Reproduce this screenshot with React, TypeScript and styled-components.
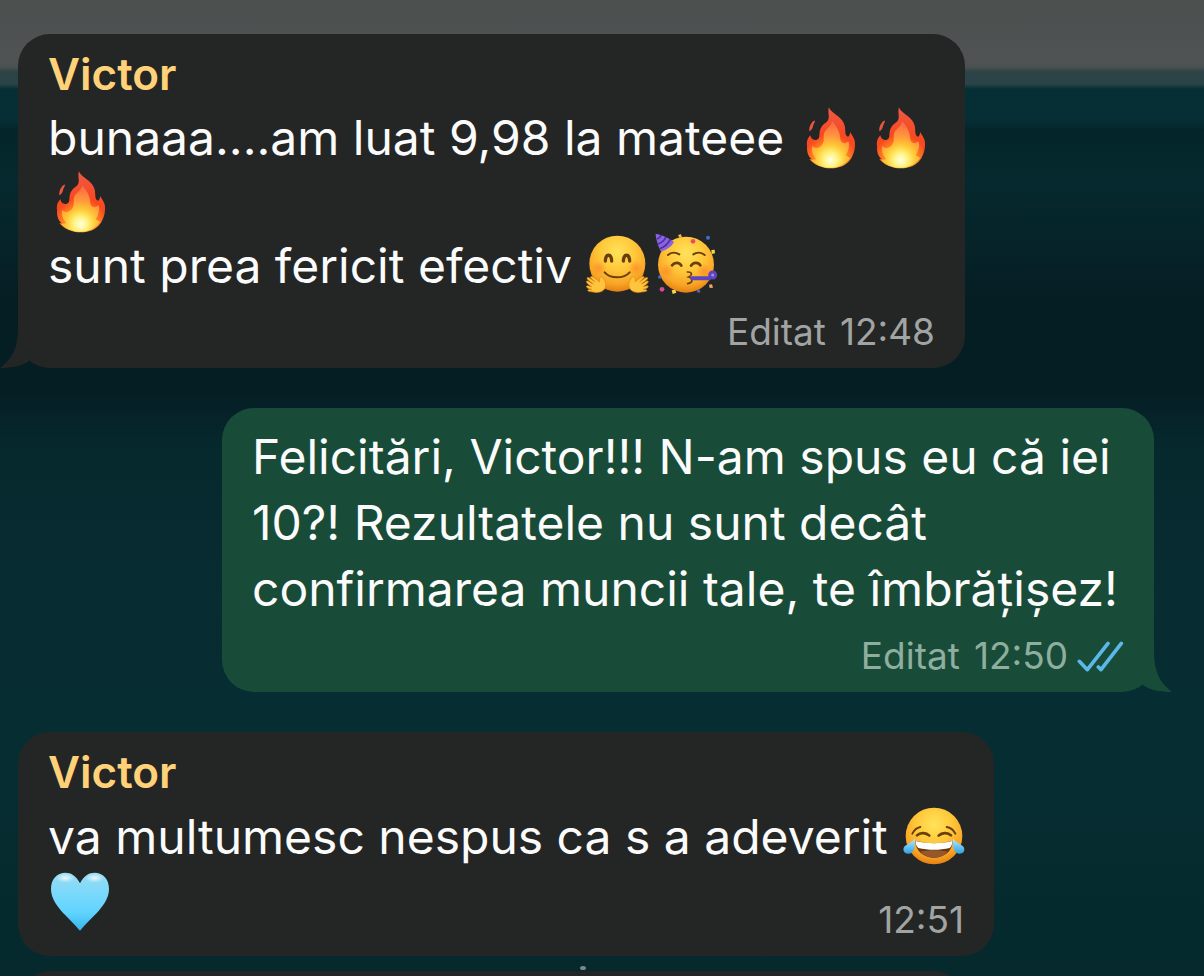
import React from "react";
import styled, { createGlobalStyle } from "styled-components";

const GlobalStyle = createGlobalStyle`
  *, *::before, *::after { box-sizing: border-box; }
  body {
    margin: 0;
    background: #052a2f;
    font-family: Inter, "Liberation Sans", sans-serif;
    color: #fbfbfb;
  }
`;

const incoming = "#242625";
const outgoing = "#184c38";

const Wallpaper = styled.main`
  position: relative;
  height: 100vh;
  overflow: hidden;
  padding: 34px 50px 0 18px;
  background: linear-gradient(
    to bottom,
    #4b504f 0,
    #4f5353 62px,
    #4a5050 67px,
    #2b4345 72px,
    #2a4448 84px,
    #052f35 89px,
    #052f34 120px,
    #04262b 130px,
    #05292e 180px,
    #05242a 240px,
    #051e23 300px,
    #051e24 390px,
    #06292e 450px,
    #072c31 600px,
    #062e32 740px,
    #05292d 980px
  );
`;

const Speck = styled.span`
  position: absolute;
  left: 48%;
  top: 966px;
  width: 6px;
  height: 4px;
  margin-left: 2px;
  border-radius: 50%;
  background: #77898a;
`;

const Thread = styled.ol`
  display: flex;
  flex-direction: column;
  gap: 40px;
  margin: 0;
  padding: 0;
  list-style: none;
`;

const Bubble = styled.li<{ $mine?: boolean; $width: number }>`
  position: relative;
  align-self: ${(p) => (p.$mine ? "flex-end" : "flex-start")};
  width: 100%;
  max-width: ${(p) => p.$width}px;
  padding: ${(p) => (p.$mine ? 16 : 12)}px 30px 14px;
  border-radius: 32px;
  background: ${(p) => (p.$mine ? outgoing : incoming)};
`;

const NextBubble = styled(Bubble)`
  margin-top: -25px;
  min-height: 80px;
`;

const Sender = styled.h2`
  margin: 0 0 4px;
  font-size: 44px;
  line-height: 56px;
  font-weight: 600;
  color: #ffd279;
`;

const Text = styled.p<{ $compact?: boolean }>`
  margin: 0;
  font-size: 48px;
  line-height: ${(p) => (p.$compact ? 64 : 66)}px;
  white-space: nowrap;
`;

const Meta = styled.footer<{ $mine?: boolean; $inline?: boolean }>`
  display: flex;
  justify-content: flex-end;
  align-items: center;
  gap: 14px;
  margin-top: ${(p) => (p.$inline ? -38 : 12)}px;
  font-size: 37px;
  line-height: 44px;
  color: ${(p) => (p.$mine ? "#8fae9f" : "#a2a4a3")};
`;

const Stamp = styled.span`
  display: flex;
  align-items: center;
  gap: 8px;
`;

const TailShape = styled.svg<{ $mine?: boolean }>`
  position: absolute;
  bottom: 0;
  ${(p) => (p.$mine ? "right: -18px;" : "left: -18px; transform: scaleX(-1);")}
  width: 40px;
  height: 40px;
  fill: ${(p) => (p.$mine ? outgoing : incoming)};
`;

const Emoji = styled.svg`
  width: 64px;
  height: 64px;
  margin-right: 6px;
  vertical-align: top;
`;

const Tail = ({ mine }: { mine?: boolean }) => (
  <TailShape $mine={mine} viewBox="0 0 40 40" aria-hidden="true">
    <path d="M22 0C22 20 28 31 40 40C28 40 18 38 11 33L4 20L10 0Z" />
  </TailShape>
);

const Ticks = () => (
  <svg width="48" height="31" viewBox="714 62 144 93" role="img" aria-label="Citit">
    <g fill="none" stroke="#5bb8e8" strokeWidth="11" strokeLinecap="round" strokeLinejoin="round">
      <path d="M724 123L748 148L810 69" />
      <path d="M781 140L789 148L850 69" />
    </g>
  </svg>
);

const Fire = () => (
  <Emoji viewBox="33 48 192 192" role="img" aria-label="foc">
    <path
      fill="url(#flame)"
      d="M126 52C130 66 152 74 165 91C181 112 170 130 180 139C186 143 188 134 190 126C196 140 206 146 204 168C203 184 199 194 192 206L189 210C177 226 157 235 132 235C104 235 80 224 67 207L74 208C63 198 59 186 60 168C59 154 61 146 70 136C72 147 80 152 90 149C103 143 92 126 104 110C113 98 119 99 123 91C129 80 121 66 126 52Z"
    />
    <path
      fill="url(#flameInner)"
      d="M135 94C150 108 160 130 160 148C162 160 172 164 184 154C190 166 184 184 176 196L190 204C174 224 154 233 130 233C106 233 86 225 72 210L88 208C76 194 72 180 76 168C82 176 94 176 102 168C118 152 104 140 114 124C122 114 134 108 135 94Z"
    />
    <path fill="#e9553d" d="M83 91C75 95 65 109 67 124C76 120 77 112 79 105C81 99 85 98 83 91Z" />
  </Emoji>
);

const Hug = () => (
  <Emoji viewBox="48 40 192 192" role="img" aria-label="îmbrățișare">
    <circle cx="145" cy="129" r="84" fill="url(#face)" />
    <circle cx="90" cy="142" r="22" fill="url(#blush)" />
    <circle cx="200" cy="142" r="22" fill="url(#blush)" />
    <g fill="none" stroke="#6b3f0d" strokeLinecap="round">
      <path strokeWidth="10" d="M109 121C110 98 127 98 128 121M163 121C165 98 181 98 182 121" />
      <path strokeWidth="6" d="M107 155C124 175 164 175 182 155" />
    </g>
    <g stroke="#e58a12" strokeWidth="2" fill="#ffc43d">
      <path d="M54 172C58 168 64 174 78 184L64 170C66 164 72 168 92 184C90 176 93 167 99 168C106 176 113 188 109 200C105 213 88 218 72 214C62 213 54 212 57 208C60 206 66 207 68 206C56 204 50 199 53 196C57 194 63 198 68 198C58 192 50 185 53 181C58 179 64 187 73 190C62 181 54 177 54 172Z" />
      <path d="M236 172C232 168 226 174 212 184L226 170C224 164 218 168 198 184C200 176 197 167 191 168C184 176 177 188 181 200C185 213 202 218 218 214C228 213 236 212 233 208C230 206 224 207 222 206C234 204 240 199 237 196C233 194 227 198 222 198C232 192 240 185 237 181C232 179 226 187 217 190C228 181 236 177 236 172Z" />
    </g>
  </Emoji>
);

const Party = () => (
  <Emoji viewBox="258 40 192 192" overflow="visible" role="img" aria-label="petrecere">
    <circle cx="351" cy="132" r="84" fill="url(#face)" />
    <circle cx="293" cy="151" r="22" fill="url(#blush)" />
    <circle cx="405" cy="151" r="22" fill="url(#blush)" />
    <path fill="#8a63e0" d="M260 39C278 42 302 53 315 64C309 77 290 90 275 92C268 76 260 55 260 39Z" />
    <path
      fill="none"
      stroke="#4a2f9e"
      strokeWidth="5"
      d="M264 55Q273 52 277 43M267 70Q284 64 291 49M272 84Q294 76 304 56"
    />
    <g fill="none" stroke="#6b3f0d" strokeWidth="6" strokeLinecap="round">
      <path d="M297 103C306 94 320 94 331 101M373 101C383 94 397 94 407 103" />
      <path strokeWidth="8" d="M309 134C317 124 331 124 337 135M366 135C373 124 388 124 394 134" />
      <path strokeWidth="5" d="M355 154C370 153 371 164 359 169C374 173 371 188 356 189" />
    </g>
    <path fill="none" stroke="#5f45bd" strokeWidth="12" strokeLinecap="round" d="M369 173L421 173" />
    <circle cx="431" cy="163" r="9" fill="#a48ae6" stroke="#5f45bd" strokeWidth="9" />
    <circle cx="372" cy="62" r="7" fill="#f0495e" />
    <circle cx="279" cy="206" r="7" fill="#d94a98" />
    <circle cx="417" cy="51" r="6" fill="#3d6fc6" />
    <circle cx="272" cy="169" r="5" fill="#3d6fc6" />
    <path fill="#f3b04e" d="M327 44l8-4 4 8-7 5z" />
    <path fill="#f6d548" d="M427 88l10-1 1 11-10 2zM308 209l11-2 3 9-11 4z" />
    <path fill="#f0a46a" d="M420 192l9-1 3 10-10 1z" />
    <path fill="#5266c7" d="M384 209l8-3 2 9-9 1z" />
  </Emoji>
);

const Joy = () => (
  <Emoji viewBox="58 43 192 192" role="img" aria-label="lacrimi de râs">
    <circle cx="157" cy="139" r="85" fill="url(#face)" />
    <g fill="none" stroke="#6b3f0d" strokeLinecap="round">
      <path strokeWidth="6" d="M92 132C97 122 106 114 116 112M195 112C207 114 216 122 221 132" />
      <path strokeWidth="8" d="M106 137C116 127 134 129 143 138M171 138C180 129 198 127 208 137" />
    </g>
    <path fill="#6a3510" d="M101 153C137 163 177 163 213 153C213 184 187 204 157 204C127 204 101 184 101 153Z" />
    <path fill="#fff" d="M102 154C138 163 176 163 212 154C212 164 209 171 204 175C174 182 140 182 110 175C104 169 102 164 102 154Z" />
    <path fill="#96582a" d="M116 186C140 180 174 180 198 186C180 209 134 209 116 186Z" />
    <path fill="url(#tear)" d="M99 147C102 164 99 189 83 192C68 195 60 180 69 170C76 163 91 158 99 147Z" />
    <path fill="url(#tear)" d="M214 147C211 164 215 189 231 192C246 195 253 180 244 170C237 163 222 158 214 147Z" />
  </Emoji>
);

const BlueHeart = () => (
  <Emoji viewBox="144 63 192 192" role="img" aria-label="inimă albastră">
    <path
      fill="url(#heart)"
      d="M240 103C229 80 213 71 196 71C171 71 153 91 153 119C153 168 205 203 240 245C275 203 327 168 327 119C327 91 309 71 284 71C267 71 251 80 240 103Z"
    />
    <ellipse cx="196" cy="87" rx="28" ry="14" fill="url(#gloss)" />
    <ellipse cx="284" cy="87" rx="28" ry="14" fill="url(#gloss)" />
  </Emoji>
);

const HiddenDefs = styled.svg`
  position: absolute;
  width: 0;
  height: 0;
`;

const EmojiPaints = () => (
  <HiddenDefs aria-hidden="true">
    <defs>
      <radialGradient id="flame" gradientUnits="userSpaceOnUse" cx="131" cy="215" r="165">
        <stop offset="0" stopColor="#ffe04a" />
        <stop offset="0.3" stopColor="#ff8a22" />
        <stop offset="0.5" stopColor="#f8481f" />
        <stop offset="1" stopColor="#ee5a48" />
      </radialGradient>
      <radialGradient id="flameInner" gradientUnits="userSpaceOnUse" cx="131" cy="210" r="112">
        <stop offset="0" stopColor="#ffffe6" />
        <stop offset="0.2" stopColor="#fff27a" />
        <stop offset="0.4" stopColor="#ffc836" />
        <stop offset="0.65" stopColor="#ff963c" />
        <stop offset="1" stopColor="#fa6a45" />
      </radialGradient>
      <radialGradient id="face" cx="0.5" cy="0.3" r="0.7">
        <stop offset="0" stopColor="#ffe35a" />
        <stop offset="0.45" stopColor="#ffc83a" />
        <stop offset="0.8" stopColor="#f9a526" />
        <stop offset="1" stopColor="#e58014" />
      </radialGradient>
      <radialGradient id="blush">
        <stop offset="0" stopColor="#ff7a2a" stopOpacity="0.55" />
        <stop offset="1" stopColor="#ff7a2a" stopOpacity="0" />
      </radialGradient>
      <linearGradient id="tear" x1="0" y1="0" x2="0" y2="1">
        <stop offset="0" stopColor="#bfe9fb" />
        <stop offset="0.5" stopColor="#6cc8f4" />
        <stop offset="1" stopColor="#319fdf" />
      </linearGradient>
      <linearGradient id="heart" x1="0" y1="0" x2="0" y2="1">
        <stop offset="0" stopColor="#9adcf2" />
        <stop offset="0.35" stopColor="#7bd9fa" />
        <stop offset="0.7" stopColor="#5fd3ff" />
        <stop offset="1" stopColor="#35b4ea" />
      </linearGradient>
      <radialGradient id="gloss">
        <stop offset="0" stopColor="#fff" stopOpacity="0.8" />
        <stop offset="1" stopColor="#fff" stopOpacity="0" />
      </radialGradient>
    </defs>
  </HiddenDefs>
);

export default function App() {
  return (
    <Wallpaper>
      <GlobalStyle />
      <EmojiPaints />
      <Speck />
      <Thread>
        <Bubble $width={947}>
          <Sender>Victor</Sender>
          <Text $compact>
            bunaaa....am luat 9,98 la mateee <Fire />
            <Fire />
            <br />
            <Fire />
            <br />
            sunt prea fericit efectiv <Hug />
            <Party />
          </Text>
          <Meta>
            <span>Editat</span>
            <time>12:48</time>
          </Meta>
          <Tail />
        </Bubble>

        <Bubble $mine $width={932}>
          <Text>
            Felicitări, Victor!!! N-am spus eu că iei
            <br />
            10?! Rezultatele nu sunt decât
            <br />
            confirmarea muncii tale, te îmbrățișez!
          </Text>
          <Meta $mine>
            <span>Editat</span>
            <Stamp>
              <time>12:50</time>
              <Ticks />
            </Stamp>
          </Meta>
          <Tail mine />
        </Bubble>

        <Bubble $width={976}>
          <Sender>Victor</Sender>
          <Text>
            va multumesc nespus ca s a adeverit <Joy />
            <br />
            <BlueHeart />
          </Text>
          <Meta $inline>
            <time>12:51</time>
          </Meta>
        </Bubble>

        <NextBubble $width={947} aria-hidden="true" />
      </Thread>
    </Wallpaper>
  );
}
